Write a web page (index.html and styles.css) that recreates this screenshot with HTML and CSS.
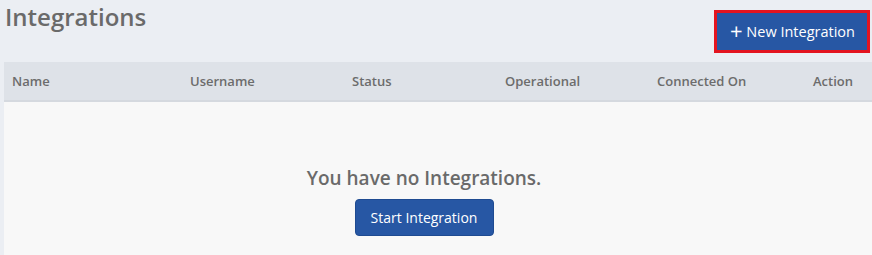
FILE: index.html
```html
<!DOCTYPE html>
<html lang="en">
<head>
    <meta charset="UTF-8">
    <title>Integrations</title>
    <link rel="stylesheet" href="styles.css">
</head>
<body>
    <div class="page">
        <div class="page-head">
            <h1 class="title">Integrations</h1>
            <button class="btn btn-new"><span class="plus">+</span> New Integration</button>
        </div>
        <div class="table">
            <div class="table-head">
                <div class="col col-name">Name</div>
                <div class="col col-user">Username</div>
                <div class="col col-status">Status</div>
                <div class="col col-op">Operational</div>
                <div class="col col-conn">Connected On</div>
                <div class="col col-action">Action</div>
            </div>
            <div class="table-empty">
                <div class="empty-text">You have no Integrations.</div>
                <button class="btn btn-start">Start Integration</button>
            </div>
        </div>
    </div>
</body>
</html>
```

FILE: styles.css
```css
* {
    margin: 0;
    padding: 0;
    box-sizing: border-box;
}

body {
    background: #ebeef3;
    font-family: 'Open Sans', 'Noto Sans', sans-serif;
    color: #666;
}

.page {
    padding-left: 4px;
}

.page-head {
    display: flex;
    justify-content: space-between;
    align-items: flex-start;
    height: 62px;
}

.title {
    font-size: 24px;
    font-weight: 600;
    color: #6a6a6a;
    line-height: 33px;
    margin-left: 1px;
}

.btn {
    font-family: inherit;
    background: #2757a4;
    color: #fff;
    border: 1px solid #1f4b91;
    border-radius: 4px;
    cursor: pointer;
}

.btn-new {
    margin-top: 10px;
    margin-right: 2px;
    width: 156px;
    height: 43px;
    border: 3px solid #e3141f;
    border-radius: 0;
    font-size: 14.5px;
    padding: 0 0 3px 1px;
}

.plus {
    font-size: 22px;
    font-weight: 400;
    line-height: 1;
    vertical-align: -2px;
}

.table-head {
    display: flex;
    align-items: center;
    height: 40px;
    background: #dee2e8;
    border-bottom: 2px solid #d5d9df;
    font-size: 13px;
    font-weight: 600;
    color: #6c6c6c;
}

.col-name { width: 186px; padding-left: 8px; }
.col-user { width: 162px; }
.col-status { width: 153px; }
.col-op { width: 152px; }
.col-conn { width: 156px; }
.col-action { flex: 1; }

.table-empty {
    background: #f8f8f8;
    height: 153px;
    display: flex;
    flex-direction: column;
    align-items: center;
    padding-top: 63px;
    padding-right: 28px;
}

.empty-text {
    font-size: 19px;
    font-weight: 600;
    color: #6a6a6a;
    line-height: 26px;
}

.btn-start {
    margin-top: 8px;
    width: 139px;
    height: 37px;
    font-size: 14px;
}
```
